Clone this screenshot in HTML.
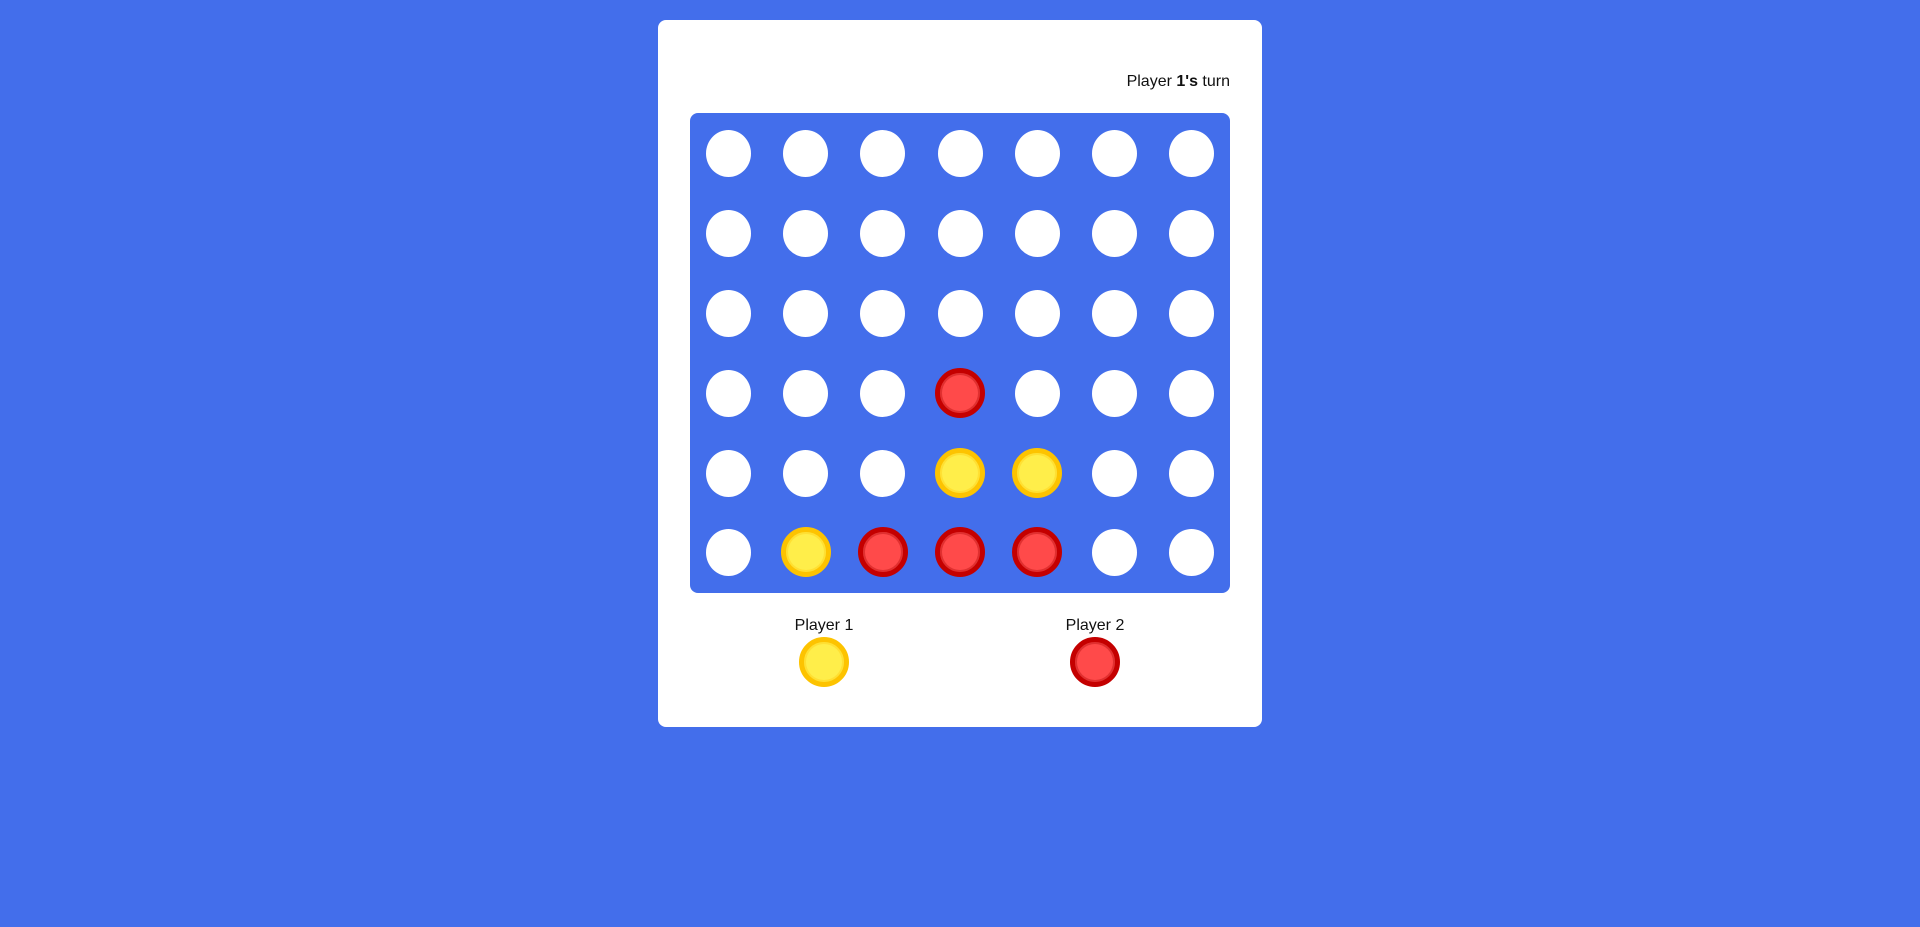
<!DOCTYPE html>
<html><head><style>
html,body{margin:0;padding:0;width:1920px;height:927px;background:#436eeb;overflow:hidden;font-family:"Liberation Sans",sans-serif;}
.card{position:absolute;left:658px;top:20px;width:604px;height:707px;background:#fff;border-radius:8px;}
.turn{position:absolute;right:32px;top:52px;font-size:16px;color:#111;line-height:20px;}
.board{position:absolute;left:690px;top:113px;width:540px;height:480px;background:#436eeb;border-radius:8px;}
.h{position:absolute;width:45px;height:47px;border-radius:50%;background:#fff;}
.p{position:absolute;width:50px;height:50px;border-radius:50%;box-sizing:border-box;}
.y{background:#ffee4a;border:5px solid #fdc300;box-shadow:inset 0 0 0 2px #ffe033;}
.r{background:#ff4a4a;border:5px solid #c40000;box-shadow:inset 0 0 0 2px #e03030;}
.lbl{position:absolute;font-size:16px;color:#111;width:120px;text-align:center;line-height:20px;}
</style></head><body>
<div class="card"><div class="turn">Player <b>1's</b> turn</div></div>
<div class="board"></div>
<div id="g"></div>
<div class="lbl" style="left:764px;top:616px">Player 1</div>
<div class="lbl" style="left:1035px;top:616px">Player 2</div>
<div class="p y" style="left:799px;top:637px"></div>
<div class="p r" style="left:1070px;top:637px"></div>
<script>
var cx=[728.6,805.7,882.9,960,1037,1114,1191],cy=[153,233,313,393,473,552];
var b=[[0,0,0,0,0,0,0],[0,0,0,0,0,0,0],[0,0,0,0,0,0,0],[0,0,0,2,0,0,0],[0,0,0,1,1,0,0],[0,1,2,2,2,0,0]];
var h='';
for(var r=0;r<6;r++)for(var c=0;c<7;c++){var v=b[r][c];
if(v==0)h+='<div class="h" style="left:'+(cx[c]-22.5)+'px;top:'+(cy[r]-23.5)+'px"></div>';
else h+='<div class="p '+(v==1?'y':'r')+'" style="left:'+(cx[c]-25)+'px;top:'+(cy[r]-25)+'px"></div>';}
document.getElementById('g').innerHTML=h;
</script>
</body></html>
